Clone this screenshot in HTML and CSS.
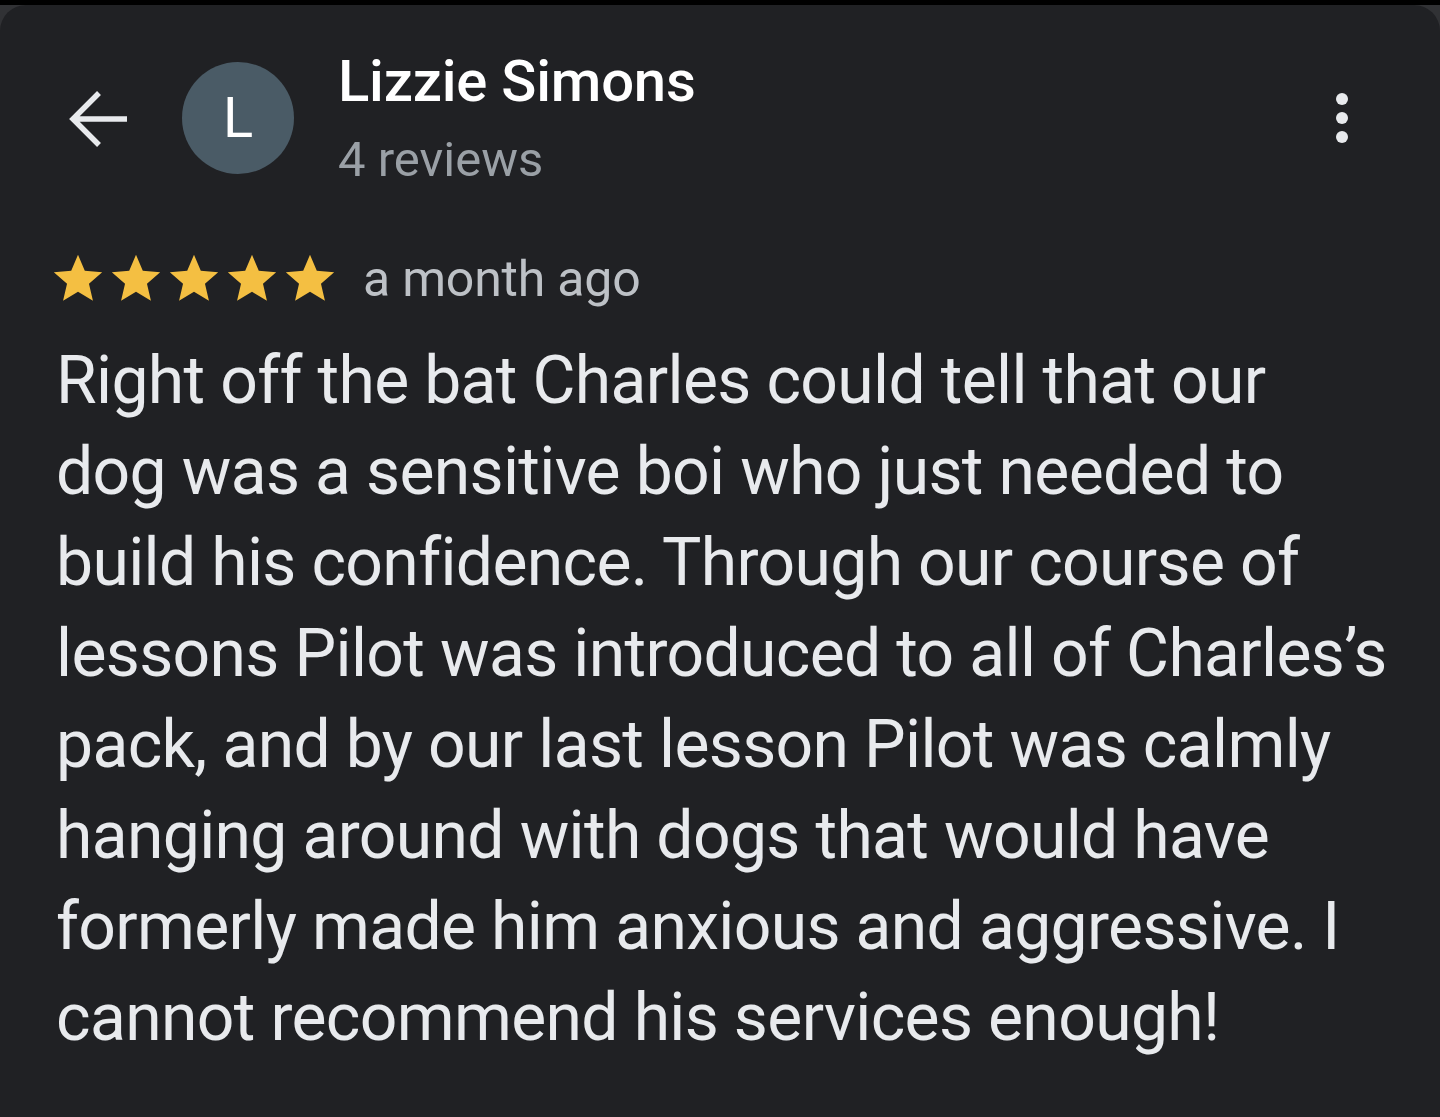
FILE: index.html
```html
<!DOCTYPE html>
<html lang="en">
<head>
    <meta charset="UTF-8">
    <meta name="viewport" content="width=device-width, initial-scale=1.0">
    <title>Lizzie Simons - review</title>
    <link rel="stylesheet" href="styles.css">
</head>
<body>
    <div class="status-strip"></div>
    <div class="sheet">
        <!-- Cabecera -->
        <header class="review-header">
            <button class="back-btn" aria-label="Back">
                <svg viewBox="0 0 60 60" width="60" height="60">
                    <path d="M59 30H5M31 4L5 30l26 26" fill="none" stroke="#e8eaed" stroke-width="5.5"/>
                </svg>
            </button>
            <div class="avatar">L</div>
            <div class="author">
                <div class="author-name">Lizzie Simons</div>
                <div class="author-meta">4 reviews</div>
            </div>
            <button class="more-btn" aria-label="More">
                <span></span><span></span><span></span>
            </button>
        </header>

        <!-- Reseña -->
        <section class="review">
            <div class="rating-row">
                <div class="stars">
                    <svg viewBox="0 0 24 24"><path d="M12 17.27L18.18 21l-1.64-7.03L22 9.24l-7.19-.61L12 2 9.19 8.63 2 9.24l5.46 4.73L5.82 21z"/></svg>
                    <svg viewBox="0 0 24 24"><path d="M12 17.27L18.18 21l-1.64-7.03L22 9.24l-7.19-.61L12 2 9.19 8.63 2 9.24l5.46 4.73L5.82 21z"/></svg>
                    <svg viewBox="0 0 24 24"><path d="M12 17.27L18.18 21l-1.64-7.03L22 9.24l-7.19-.61L12 2 9.19 8.63 2 9.24l5.46 4.73L5.82 21z"/></svg>
                    <svg viewBox="0 0 24 24"><path d="M12 17.27L18.18 21l-1.64-7.03L22 9.24l-7.19-.61L12 2 9.19 8.63 2 9.24l5.46 4.73L5.82 21z"/></svg>
                    <svg viewBox="0 0 24 24"><path d="M12 17.27L18.18 21l-1.64-7.03L22 9.24l-7.19-.61L12 2 9.19 8.63 2 9.24l5.46 4.73L5.82 21z"/></svg>
                </div>
                <span class="review-date">a month ago</span>
            </div>
            <p class="review-text">Right off the bat Charles could tell that our<br>dog was a sensitive boi who just needed to<br>build his confidence. Through our course of<br>lessons Pilot was introduced to all of Charles’s<br>pack, and by our last lesson Pilot was calmly<br>hanging around with dogs that would have<br>formerly made him anxious and aggressive. I<br>cannot recommend his services enough!</p>
        </section>
    </div>
</body>
</html>
```

FILE: styles.css
```css
body {
    margin: 0;
    background: #313235;
    font-family: Roboto, "Noto Sans", sans-serif;
    min-height: 100vh;
}
.status-strip {
    height: 5px;
    background: #000;
}
.sheet {
    background: #202124;
    border-radius: 26px 26px 0 0;
    height: 1112px;
    box-sizing: border-box;
}
.review-header {
    display: flex;
    align-items: center;
    height: 218px;
    padding: 0 86px 0 68px;
    box-sizing: border-box;
}
button {
    background: none;
    border: none;
    padding: 0;
    cursor: pointer;
}
.back-btn {
    width: 60px;
    height: 60px;
    display: flex;
    margin-right: 54px;
    margin-top: 9px;
}
.avatar {
    width: 112px;
    height: 112px;
    border-radius: 50%;
    background: #4a5b66;
    color: #fff;
    font-size: 56px;
    display: flex;
    align-items: center;
    justify-content: center;
    flex-shrink: 0;
    margin-right: 44px;
    margin-top: 8px;
}
.author {
    flex: 1;
    margin-top: 16px;
}
.author-name {
    color: #fff;
    font-size: 58px;
    font-weight: 500;
    line-height: 76px;
    letter-spacing: -0.2px;
}
.author-meta {
    color: #9aa0a6;
    font-size: 49px;
    line-height: 82px;
}
.more-btn {
    display: flex;
    flex-direction: column;
    gap: 7px;
    align-items: center;
    width: 24px;
    margin-top: 8px;
}
.more-btn span {
    width: 12px;
    height: 12px;
    border-radius: 50%;
    background: #e8eaed;
}
.review {
    padding: 0 56px;
}
.rating-row {
    display: flex;
    align-items: center;
    height: 112px;
}
.stars {
    display: flex;
    margin-left: -7px;
    margin-right: 24px;
}
.stars svg {
    width: 58px;
    height: 58px;
    fill: #f4bf42;
}
.review-date {
    color: #bdc1c6;
    font-size: 50px;
    letter-spacing: -0.2px;
}
.review-text {
    margin: 0;
    color: #e8eaed;
    font-size: 66px;
    line-height: 91px;
    letter-spacing: -0.65px;
    white-space: nowrap;
}
```
